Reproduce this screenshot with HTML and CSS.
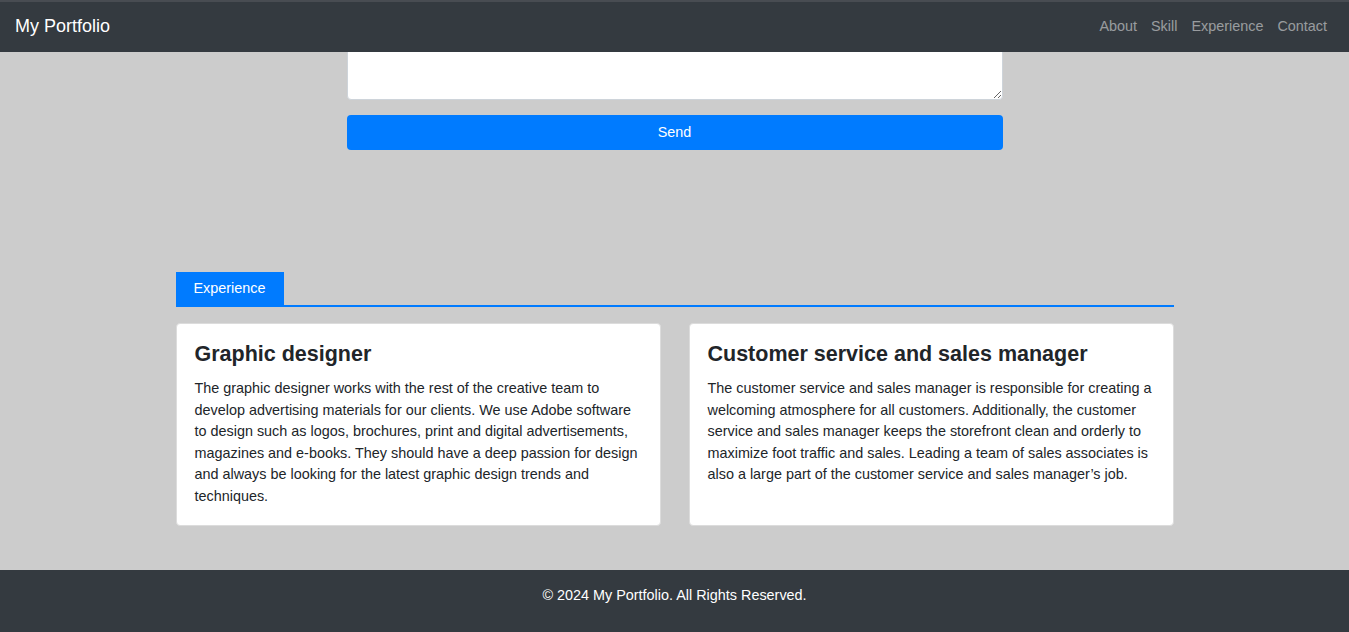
FILE: index.html
```html
<!DOCTYPE html>
<html lang="en">
<head>
<meta charset="utf-8">
<title>My Portfolio</title>
<link rel="stylesheet" href="styles.css">
</head>
<body>
<header class="navbar">
  <a class="brand" href="#">My Portfolio</a>
  <nav class="nav">
    <a class="nav-link" href="#about">About</a>
    <a class="nav-link" href="#skill">Skill</a>
    <a class="nav-link" href="#experience">Experience</a>
    <a class="nav-link" href="#contact">Contact</a>
  </nav>
</header>
<main class="main">
  <section class="contact" id="contact">
    <form class="contact-form">
      <textarea class="message" aria-label="Message"></textarea>
      <button class="send" type="button">Send</button>
    </form>
  </section>
  <section class="experience" id="experience">
    <div class="tabs"><span class="tab">Experience</span></div>
    <div class="cards">
      <article class="card">
        <h3 class="card-title">Graphic designer</h3>
        <p class="card-text">The graphic designer works with the rest of the creative team to develop advertising materials for our clients. We use Adobe software to design such as logos, brochures, print and digital advertisements, magazines and e-books. They should have a deep passion for design and always be looking for the latest graphic design trends and techniques.</p>
      </article>
      <article class="card">
        <h3 class="card-title">Customer service and sales manager</h3>
        <p class="card-text">The customer service and sales manager is responsible for creating a welcoming atmosphere for all customers. Additionally, the customer service and sales manager keeps the storefront clean and orderly to maximize foot traffic and sales. Leading a team of sales associates is also a large part of the customer service and sales manager’s job.</p>
      </article>
    </div>
  </section>
</main>
<footer class="footer">© 2024 My Portfolio. All Rights Reserved.</footer>
</body>
</html>
```
FILE: styles.css
```css
* { box-sizing: border-box; }
html, body { margin: 0; padding: 0; }
body {
  background: #cccccc;
  font-family: "Liberation Sans", Arial, sans-serif;
  color: #212529;
}
.navbar {
  position: fixed;
  top: 0;
  left: 0;
  right: 0;
  z-index: 10;
  height: 52px;
  background: #343a40;
  border-top: 2px solid #484c52;
  display: flex;
  align-items: center;
  justify-content: space-between;
  padding: 0 15px 2px;
}
.brand {
  color: #ffffff;
  text-decoration: none;
  font-size: 18px;
  line-height: 22px;
}
.nav { display: flex; }
.nav-link {
  color: rgba(255, 255, 255, 0.5);
  text-decoration: none;
  font-size: 14.4px;
  padding: 0 7px;
}
.main { display: flex; flex-direction: column; align-items: center; }
.contact { width: 656px; }
.contact-form { display: flex; flex-direction: column; }
.message {
  display: block;
  width: 100%;
  height: 100px;
  margin: 0;
  border: 1px solid #ced4da;
  border-radius: 4px;
  background: #fff;
  font-family: inherit;
}
.send {
  margin-top: 15px;
  height: 35px;
  border: none;
  border-radius: 4px;
  background: #007bff;
  color: #fff;
  font-family: inherit;
  font-size: 14.4px;
  line-height: 17px;
  padding: 0 0 1px;
}
.experience {
  width: 998px;
  margin-top: 122px;
  margin-bottom: 44px;
}
.tabs {
  display: flex;
  border-bottom: 2px solid #007bff;
}
.tab {
  background: #007bff;
  color: #fff;
  font-size: 14.4px;
  line-height: 17px;
  padding: 8px 18px;
  height: 33px;
}
.cards {
  display: grid;
  grid-template-columns: 1fr 1fr;
  gap: 28px;
  margin-top: 16px;
}
.card {
  background: #fff;
  border: 1px solid #dcdcdc;
  border-radius: 4px;
  padding: 17px 18px 17px;
}
.card-title {
  margin: 0 0 11px;
  font-size: 21.5px;
  line-height: 26px;
  font-weight: bold;
}
.card-text {
  margin: 0;
  font-size: 14.4px;
  line-height: 21.6px;
}
.footer {
  background: #343a40;
  color: #fff;
  text-align: center;
  font-size: 14.4px;
  line-height: 20px;
  padding: 15px 0 27px;
}
```
